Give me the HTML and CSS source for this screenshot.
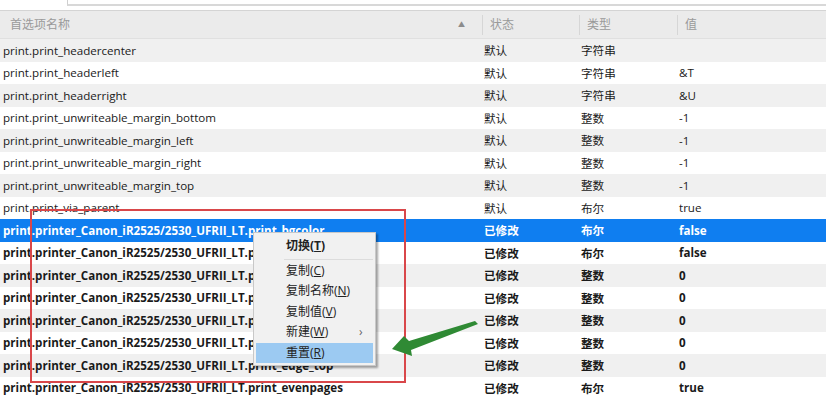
FILE: index.html
```html
<!DOCTYPE html>
<html lang="zh-CN">
<head>
    <meta charset="UTF-8">
    <title>首选项</title>
    <link rel="stylesheet" href="styles.css">
</head>
<body>
    <div class="topbar"><div class="search"></div></div>
    <div class="prefs">
        <div class="row head">
            <div class="cell name">首选项名称<span class="sort">&#9650;</span></div>
            <div class="cell">状态</div>
            <div class="cell">类型</div>
            <div class="cell">值</div>
        </div>
        <div class="row">
            <div class="cell name">print.print_headercenter</div>
            <div class="cell">默认</div><div class="cell">字符串</div><div class="cell"></div>
        </div>
        <div class="row">
            <div class="cell name">print.print_headerleft</div>
            <div class="cell">默认</div><div class="cell">字符串</div><div class="cell">&amp;T</div>
        </div>
        <div class="row">
            <div class="cell name">print.print_headerright</div>
            <div class="cell">默认</div><div class="cell">字符串</div><div class="cell">&amp;U</div>
        </div>
        <div class="row">
            <div class="cell name">print.print_unwriteable_margin_bottom</div>
            <div class="cell">默认</div><div class="cell">整数</div><div class="cell">-1</div>
        </div>
        <div class="row">
            <div class="cell name">print.print_unwriteable_margin_left</div>
            <div class="cell">默认</div><div class="cell">整数</div><div class="cell">-1</div>
        </div>
        <div class="row">
            <div class="cell name">print.print_unwriteable_margin_right</div>
            <div class="cell">默认</div><div class="cell">整数</div><div class="cell">-1</div>
        </div>
        <div class="row">
            <div class="cell name">print.print_unwriteable_margin_top</div>
            <div class="cell">默认</div><div class="cell">整数</div><div class="cell">-1</div>
        </div>
        <div class="row">
            <div class="cell name">print.print_via_parent</div>
            <div class="cell">默认</div><div class="cell">布尔</div><div class="cell">true</div>
        </div>
        <div class="row modified selected">
            <div class="cell name">print.printer_Canon_iR2525/2530_UFRII_LT.print_bgcolor</div>
            <div class="cell">已修改</div><div class="cell">布尔</div><div class="cell">false</div>
        </div>
        <div class="row modified">
            <div class="cell name">print.printer_Canon_iR2525/2530_UFRII_LT.p</div>
            <div class="cell">已修改</div><div class="cell">布尔</div><div class="cell">false</div>
        </div>
        <div class="row modified">
            <div class="cell name">print.printer_Canon_iR2525/2530_UFRII_LT.p</div>
            <div class="cell">已修改</div><div class="cell">整数</div><div class="cell">0</div>
        </div>
        <div class="row modified">
            <div class="cell name">print.printer_Canon_iR2525/2530_UFRII_LT.p</div>
            <div class="cell">已修改</div><div class="cell">整数</div><div class="cell">0</div>
        </div>
        <div class="row modified">
            <div class="cell name">print.printer_Canon_iR2525/2530_UFRII_LT.p</div>
            <div class="cell">已修改</div><div class="cell">整数</div><div class="cell">0</div>
        </div>
        <div class="row modified">
            <div class="cell name">print.printer_Canon_iR2525/2530_UFRII_LT.p</div>
            <div class="cell">已修改</div><div class="cell">整数</div><div class="cell">0</div>
        </div>
        <div class="row modified">
            <div class="cell name">print.printer_Canon_iR2525/2530_UFRII_LT.print_edge_top</div>
            <div class="cell">已修改</div><div class="cell">整数</div><div class="cell">0</div>
        </div>
        <div class="row modified">
            <div class="cell name">print.printer_Canon_iR2525/2530_UFRII_LT.print_evenpages</div>
            <div class="cell">已修改</div><div class="cell">布尔</div><div class="cell">true</div>
        </div>
    </div>

    <!-- 标注框 -->
    <div class="mark"></div>

    <!-- 右键菜单 -->
    <div class="menu">
        <div class="item strong">切换(<u>T</u>)</div>
        <div class="sep"></div>
        <div class="item">复制(<u>C</u>)</div>
        <div class="item">复制名称(<u>N</u>)</div>
        <div class="item">复制值(<u>V</u>)</div>
        <div class="item">新建(<u>W</u>)<span class="sub">&#8250;</span></div>
        <div class="item hover">重置(<u>R</u>)</div>
    </div>

    <svg class="arrow" width="90" height="40" viewBox="0 0 90 40">
        <path d="M85 3 L19 23 L14 18 L2 31 L22 38 L21 32 L88 6 Z" fill="#2f8a34"/>
    </svg>
</body>
</html>
```

FILE: styles.css
```css
body {
    margin: 0;
    width: 826px;
    height: 400px;
    overflow: hidden;
    background: #fff;
    font-family: "Open Sans", "Noto Sans CJK SC", sans-serif;
    font-size: 11.6px;
    color: #1a1a1a;
    position: relative;
}

.topbar {
    height: 11px;
    border-bottom: 1px solid #d4d4d4;
    box-sizing: border-box;
    padding-left: 67px;
}

.search {
    height: 4px;
    border-left: 1px solid #cfcfcf;
    border-bottom: 2px solid #d8d8d8;
}

.row {
    display: grid;
    grid-template-columns: 482px 97px 98px 1fr;
    height: 22.5px;
    align-items: center;
    white-space: nowrap;
}

.row:nth-child(even) {
    background: #f0f0f0;
}

.cell {
    padding-left: 2px;
    overflow: hidden;
}

.cell.name {
    padding-left: 3px;
}

.row.head {
    height: 28px;
    background: #ebebeb;
    color: #9a9a9a;
    border-bottom: 1px solid #e0e0e0;
    box-sizing: border-box;
    font-size: 12px;
}

.row.head .cell {
    border-left: 1px solid #d6d6d6;
    padding-left: 7px;
    height: 20px;
    line-height: 20px;
}

.row.head .cell.name {
    border-left: none;
    padding-left: 10px;
    position: relative;
}

.sort {
    position: absolute;
    left: 458px;
    top: 0;
    font-size: 7px;
    color: #8c8c8c;
}

.modified {
    font-weight: bold;
}

.row.selected {
    background: #0f7ef0;
    color: #fff;
}

.mark {
    position: absolute;
    left: 30px;
    top: 209px;
    width: 372px;
    height: 170px;
    border: 2px solid #d9474a;
}

.menu {
    position: absolute;
    left: 253px;
    top: 232px;
    width: 117px;
    padding: 3px 2px 2px 2px;
    background: #f1f1f1;
    border: 1px solid #c8c8c8;
    box-shadow: 2px 2px 2px rgba(0, 0, 0, 0.35);
    font-size: 12px;
    color: #222;
}

.item {
    height: 20.5px;
    line-height: 20.5px;
    padding-left: 30px;
    position: relative;
}

.item.strong {
    font-weight: bold;
}

.item.hover {
    background: #9ccaf2;
}

.sub {
    position: absolute;
    left: 103px;
    color: #666;
}

.sep {
    height: 1px;
    background: #dcdcdc;
    margin: 2px 0 1px 28px;
}

.arrow {
    position: absolute;
    left: 390px;
    top: 318px;
}
```
